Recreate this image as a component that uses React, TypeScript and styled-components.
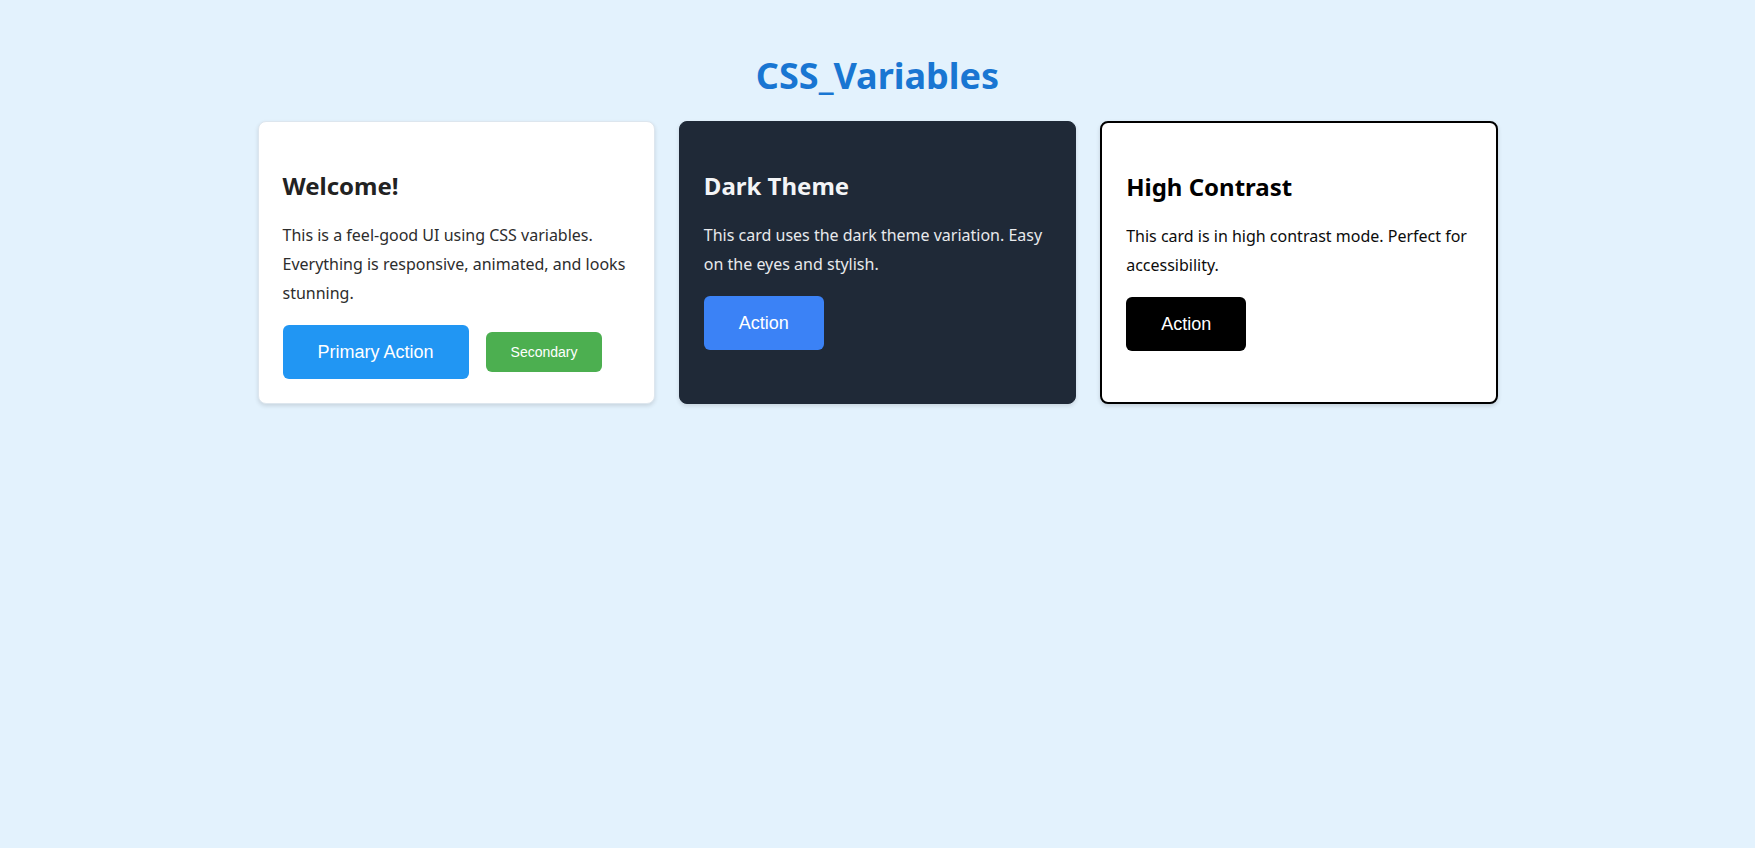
import React from "react";
import styled, {createGlobalStyle, css} from "styled-components";

type Variant = 'light' | 'dark' | 'contrast'

const colors = {
  pageBg: '#e3f2fd',
  title: '#1976d2',
  text: '#222222',
  darkBg: '#1f2937',
  darkText: '#f3f4f6',
  primary: '#2196f3',
  secondary: '#4caf50',
  darkAction: '#3b82f6',
}

const GlobalStyle = createGlobalStyle`
    html, body {
        margin: 0;
        padding: 0;
        background: ${colors.pageBg};
    }

    body {
        font-family: "Segoe UI", "Noto Sans", "Open Sans", sans-serif;
        color: ${colors.text};
        min-height: 848px;
    }
`

export default function App() {
  return (
    <>
      <GlobalStyle/>
      <Page>
        <Title>CSS_Variables</Title>
        <Grid>
          <Card variant="light">
            <CardTitle>Welcome!</CardTitle>
            <CardText>
              This is a feel-good UI using CSS variables. Everything is responsive, animated, and looks stunning.
            </CardText>
            <Actions>
              <Button tone="primary">Primary Action</Button>
              <Button tone="secondary" small>Secondary</Button>
            </Actions>
          </Card>
          <Card variant="dark">
            <CardTitle>Dark Theme</CardTitle>
            <CardText>This card uses the dark theme variation. Easy on the eyes and stylish.</CardText>
            <Actions>
              <Button tone="darkAction">Action</Button>
            </Actions>
          </Card>
          <Card variant="contrast">
            <CardTitle>High Contrast</CardTitle>
            <CardText>This card is in high contrast mode. Perfect for accessibility.</CardText>
            <Actions>
              <Button tone="black">Action</Button>
            </Actions>
          </Card>
        </Grid>
      </Page>
    </>
  )
}

const Page = styled.div`
    padding: 54px 24px 40px;
    display: flex;
    flex-direction: column;
    align-items: center;
`

const Title = styled.h1`
    margin: 0 0 24px;
    font-size: 36px;
    font-weight: 700;
    line-height: 1.2;
    color: ${colors.title};
`

const Grid = styled.div`
    width: 100%;
    max-width: 1240px;
    display: grid;
    grid-template-columns: repeat(3, 1fr);
    gap: 24px;
`

const variantStyles = {
  light: css`
      background: #ffffff;
      color: ${colors.text};
      border: 1px solid #dde6ee;
      box-shadow: 0 2px 4px rgba(0, 0, 0, 0.12);
  `,
  dark: css`
      background: ${colors.darkBg};
      color: ${colors.darkText};
      border: 1px solid ${colors.darkBg};
      box-shadow: 0 2px 4px rgba(0, 0, 0, 0.12);
  `,
  contrast: css`
      background: #ffffff;
      color: #000000;
      border: 2px solid #000000;
      box-shadow: 0 2px 4px rgba(0, 0, 0, 0.15);
  `,
}

const Card = styled.div<{ variant: Variant }>`
    box-sizing: border-box;
    border-radius: 8px;
    padding: 24px;
    ${props => variantStyles[props.variant]}
`

const CardTitle = styled.h2`
    margin: 24px 0 20px;
    font-size: 24px;
    font-weight: 700;
    line-height: 1.3;
`

const CardText = styled.p`
    margin: 0 0 17px;
    font-size: 16px;
    line-height: 1.8;
    opacity: 0.95;
`

const Actions = styled.div`
    display: flex;
    align-items: center;
    gap: 17px;
`

const toneColors = {
  primary: colors.primary,
  secondary: colors.secondary,
  darkAction: colors.darkAction,
  black: '#000000',
}

const Button = styled.button<{ tone: keyof typeof toneColors, small?: boolean }>`
    font-family: "Liberation Sans", Arial, sans-serif;
    font-size: ${props => props.small ? '14px' : '18px'};
    line-height: ${props => props.small ? '16px' : '22px'};
    padding: ${props => props.small ? '12px 25px' : '16px 35px'};
    border: none;
    border-radius: 6px;
    color: #ffffff;
    background: ${props => toneColors[props.tone]};
    cursor: pointer;
`
